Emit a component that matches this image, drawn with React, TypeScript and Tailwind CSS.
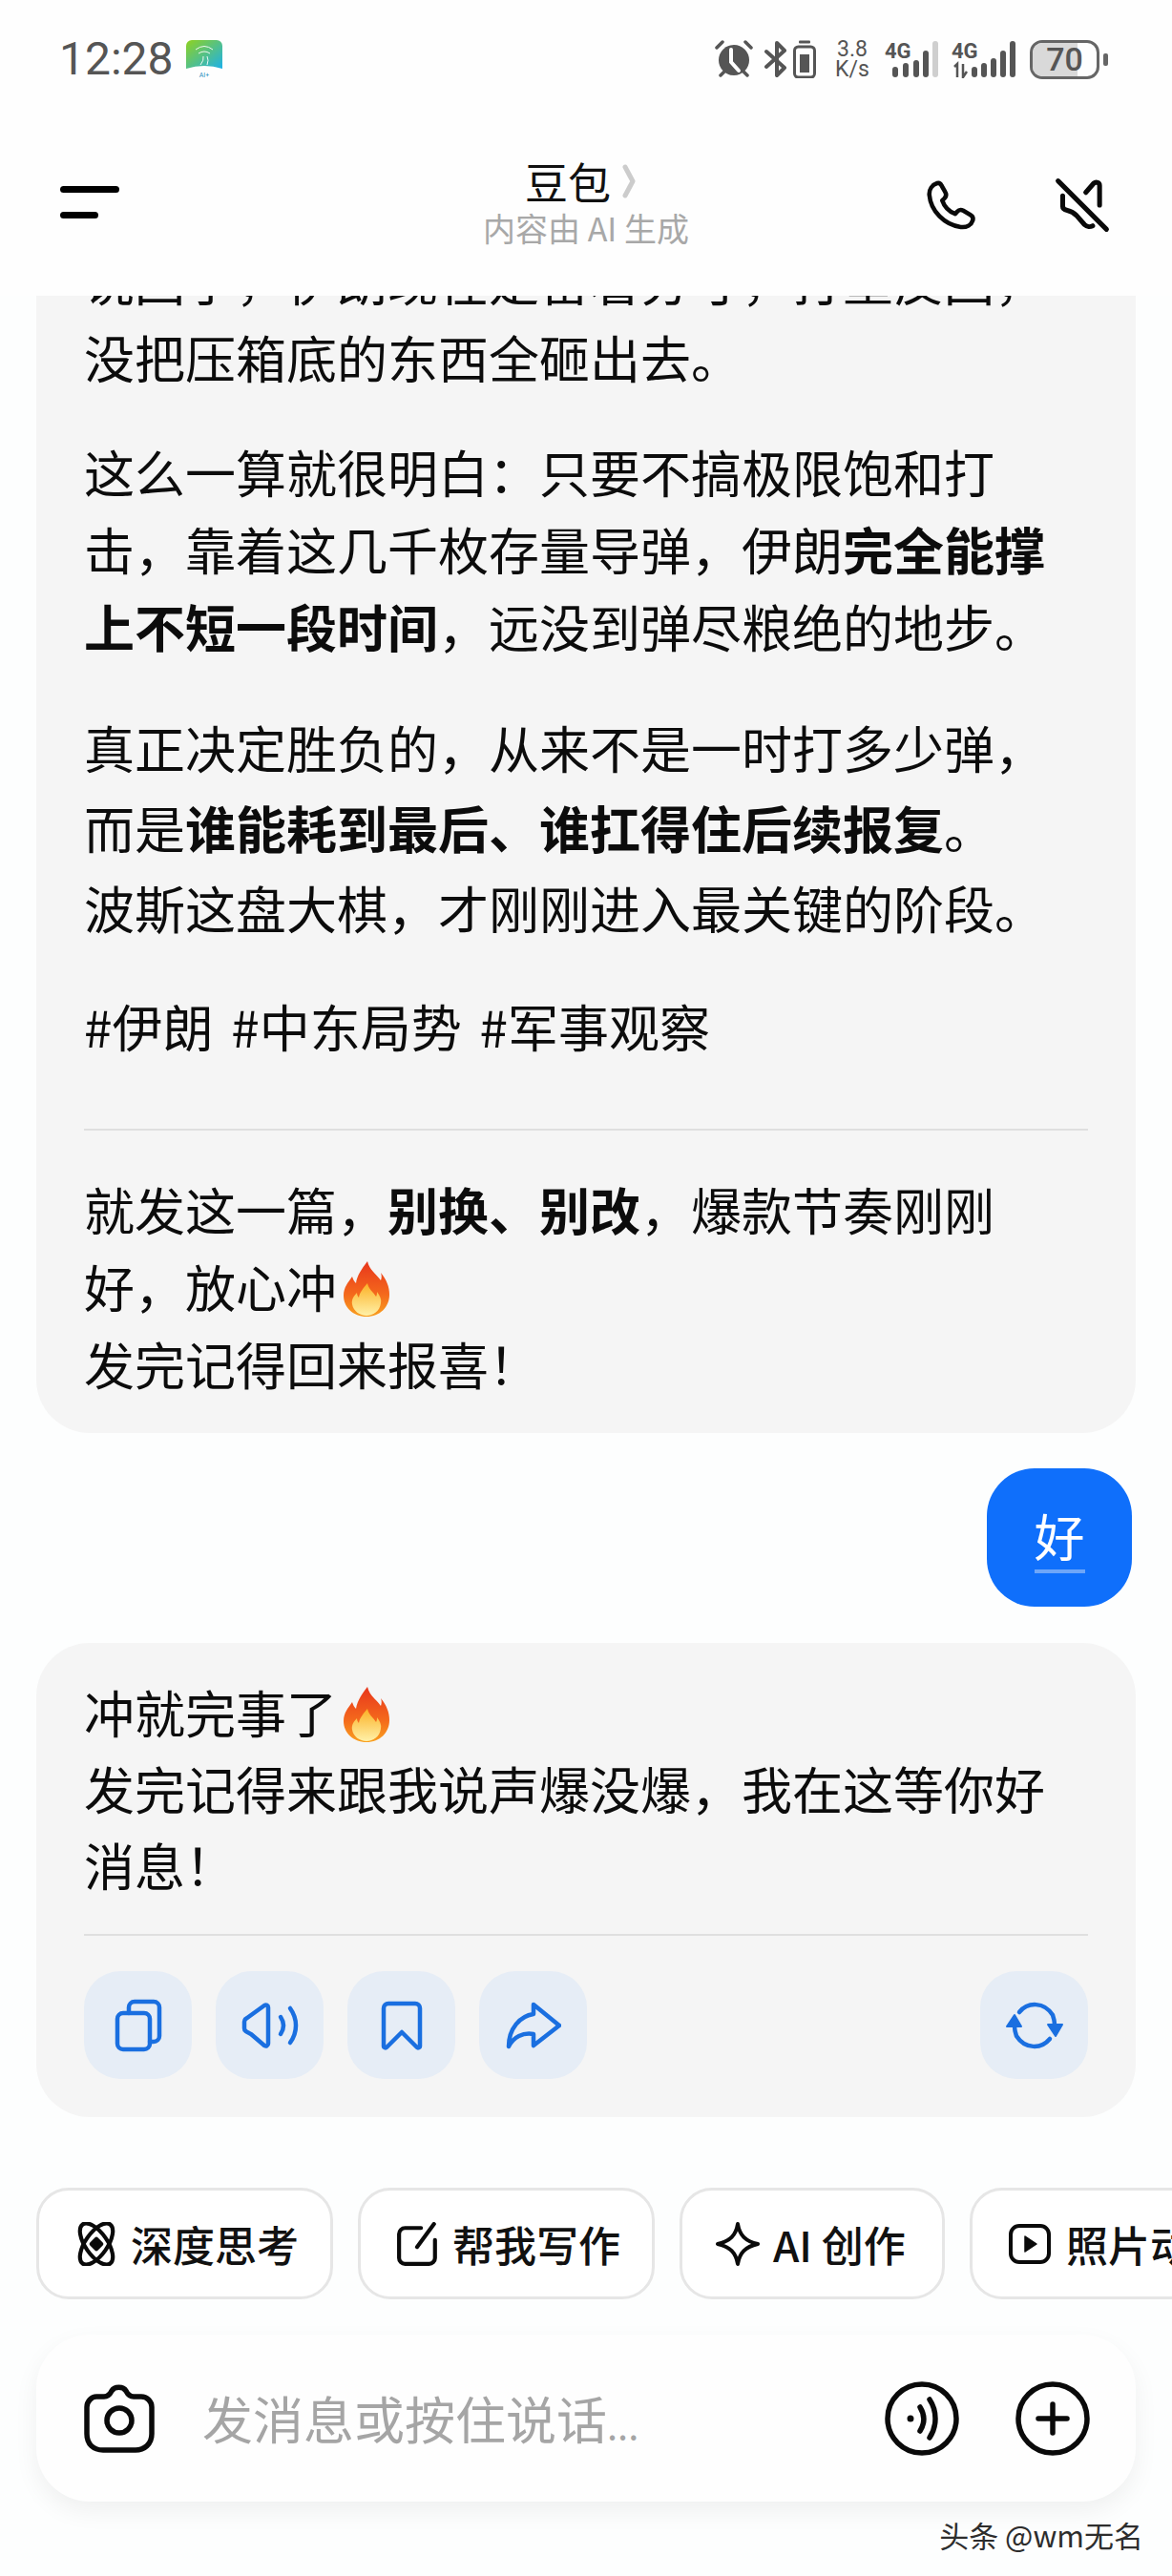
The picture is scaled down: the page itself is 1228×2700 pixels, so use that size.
import React from "react";

const cjk = "[font-family:'Noto_Sans_CJK_SC',sans-serif]";

function Flame() {
  return (
    <svg viewBox="0 0 50 60" className="inline-block w-[52px] h-[60px] align-[-10px] ml-[5px]">
      <defs>
        <linearGradient id="flameOuter" x1="0" y1="0" x2="0" y2="1">
          <stop offset="0" stopColor="#e8361c" />
          <stop offset="0.6" stopColor="#f4691c" />
          <stop offset="1" stopColor="#f9a01f" />
        </linearGradient>
        <linearGradient id="flameInner" x1="0" y1="0" x2="0" y2="1">
          <stop offset="0" stopColor="#fbb024" />
          <stop offset="1" stopColor="#fff1a8" />
        </linearGradient>
      </defs>
      <path
        d="M26 1c2 9 9 13 14 20 1-3 1-5 0-8 6 7 9 15 9 23 0 13-10 23-24 23S1 49 1 37c0-9 5-14 9-20 1 3 2 5 4 7 1-8 6-15 12-23z"
        fill="url(#flameOuter)"
      />
      <path
        d="M26 24c1 6 6 9 9 14 1-2 1-3 1-5 3 4 5 8 4 12-1 8-8 13-15 13S11 53 10 46c-1-5 2-9 5-12 0 2 1 4 2 5 1-6 5-10 9-15z"
        fill="url(#flameInner)"
      />
    </svg>
  );
}

function AppIcon() {
  return (
    <svg viewBox="0 0 38 40" className="w-[38px] h-[40px] ml-[13px]">
      <defs>
        <linearGradient id="appGrad" x1="0" y1="0" x2="1" y2="1">
          <stop offset="0" stopColor="#8fd21f" />
          <stop offset="1" stopColor="#1cb0ea" />
        </linearGradient>
      </defs>
      <path d="M0 6a6 6 0 0 1 6-6h26a6 6 0 0 1 6 6v24q-19-6-38 0z" fill="url(#appGrad)" />
      <g fill="none" stroke="#fff" strokeWidth="1" opacity="0.9">
        <path d="M10 10q9-7 18 0" />
        <path d="M13 14q6-4 12 0" />
        <path d="M15 26q4-5 3-9" />
        <path d="M22 26q2-5 0-9" />
      </g>
      <text x="19" y="38.5" textAnchor="middle" fontSize="7" fill="#2a8fc0" fontFamily="Roboto">AI+</text>
    </svg>
  );
}

function StatusIcons() {
  return (
    <div className="flex items-center text-[#555] [font-family:Roboto,sans-serif]">
      {/* alarm */}
      <svg viewBox="0 0 42 40" className="w-[42px] h-[40px]" fill="#555">
        <circle cx="21" cy="21" r="16" />
        <path d="M3 8l6-6M39 8l-6-6M7 37l4-4M35 37l-4-4" stroke="#555" strokeWidth="3.5" strokeLinecap="round" />
        <path d="M18 10v13l8 9" stroke="#fff" strokeWidth="4" fill="none" strokeLinecap="round" />
      </svg>
      {/* bluetooth + battery */}
      <svg viewBox="0 0 24 40" className="w-[24px] h-[40px] ml-[11px]" fill="none" stroke="#555" strokeWidth="4" strokeLinecap="round" strokeLinejoin="round">
        <path d="M2 12l19 17-8 8V3l8 8L2 28" />
      </svg>
      <svg viewBox="0 0 24 40" className="w-[24px] h-[40px] ml-[6px]">
        <rect x="6" y="0.5" width="12" height="3" rx="1" fill="#555" />
        <rect x="1.5" y="7" width="21" height="32" rx="4" fill="none" stroke="#555" strokeWidth="3" />
        <rect x="7" y="15" width="10" height="19" fill="#555" />
      </svg>
      <div className="ml-[19px] w-[38px] flex flex-col items-center text-[23px] leading-[21px] font-normal">
        <span>3.8</span>
        <span>K/s</span>
      </div>
      {/* sim 1 */}
      <svg viewBox="0 0 56 40" className="w-[56px] h-[40px] ml-[15px]">
        <text x="0" y="19" fontSize="22" fontWeight="700" fill="#555" fontFamily="Roboto">4G</text>
        <rect x="8" y="28" width="6" height="11" rx="3" fill="#555" />
        <rect x="19" y="24" width="6" height="15" rx="3" fill="#555" />
        <rect x="30" y="21" width="6" height="18" rx="3" fill="#555" />
        <rect x="40" y="11" width="6" height="28" rx="3" fill="#555" />
        <rect x="50" y="1" width="6" height="38" rx="3" fill="#cfcfcf" />
      </svg>
      {/* sim 2 */}
      <svg viewBox="0 0 68 40" className="w-[68px] h-[40px] ml-[14px]">
        <text x="0" y="19" fontSize="22" fontWeight="700" fill="#555" fontFamily="Roboto">4G</text>
        <path d="M3 28l3-3v14M12 25v14l4-6" stroke="#555" strokeWidth="2.5" fill="none" />
        <rect x="21" y="28" width="6" height="11" rx="3" fill="#555" />
        <rect x="31" y="24" width="6" height="15" rx="3" fill="#555" />
        <rect x="41" y="19" width="6" height="20" rx="3" fill="#555" />
        <rect x="51" y="11" width="6" height="28" rx="3" fill="#555" />
        <rect x="61" y="1" width="6" height="38" rx="3" fill="#555" />
      </svg>
      {/* battery */}
      <div className="relative ml-[14px] w-[73px] h-[41px] rounded-[13px] border-[3px] border-[#666] overflow-hidden flex items-center justify-center">
        <div className="absolute left-0 top-0 bottom-0 w-[70%] bg-[#d9d9d9]" />
        <span className="relative text-[34px] leading-none font-medium text-[#555]">70</span>
      </div>
      <div className="ml-[4px] w-[5px] h-[13px] rounded-[2px] bg-[#666]" />
    </div>
  );
}

function ActionButton({ children }: { children: React.ReactNode }) {
  return (
    <button className="w-[113px] h-[113px] rounded-[38px] bg-[#e6edf6] flex items-center justify-center">
      {children}
    </button>
  );
}

const blueStroke = {
  fill: "none",
  stroke: "#1a6fe0",
  strokeWidth: 4.5,
  strokeLinecap: "round" as const,
  strokeLinejoin: "round" as const,
};

const blackStroke = {
  fill: "none",
  stroke: "#0a0a0a",
  strokeWidth: 4,
  strokeLinecap: "round" as const,
  strokeLinejoin: "round" as const,
};

function Chip({ icon, label, className }: { icon: React.ReactNode; label: string; className: string }) {
  return (
    <div className={`shrink-0 h-[117px] rounded-[34px] border-[3px] border-[#e6e6e6] bg-white flex items-center ${className}`}>
      {icon}
      <span className="text-[44px] leading-none font-medium text-[#111] whitespace-nowrap">{label}</span>
    </div>
  );
}

export default function App() {
  return (
    <div className={`w-[1228px] h-[2700px] overflow-hidden bg-[#fdfefe] flex flex-col ${cjk}`}>
      {/* status bar + title */}
      <header className="h-[310px] shrink-0 bg-[#fefefe] relative z-10">
        <div className="h-[124px] pl-[62px] pr-[67px] flex items-center justify-between">
          <div className="flex items-center">
            <span className="text-[48px] leading-none text-[#555] [font-family:Roboto,sans-serif]">12:28</span>
            <AppIcon />
          </div>
          <StatusIcons />
        </div>
        <div className="h-[186px] pl-[63px] pr-[65px] pb-[10px] flex items-center justify-between">
          <div className="flex flex-col gap-[20px]">
            <div className="w-[62px] h-[7px] rounded-full bg-black" />
            <div className="w-[40px] h-[7px] rounded-full bg-black" />
          </div>
          <div className="flex flex-col items-center ml-[124px]">
            <div className="flex items-center">
              <span className="text-[45px] leading-[48px] text-[#111]">豆包</span>
              <svg viewBox="0 0 14 36" className="w-[14px] h-[36px] ml-[12px]" fill="none" stroke="#cccccc" strokeWidth="5" strokeLinecap="round" strokeLinejoin="round">
                <path d="M3 3l8 15-8 15" />
              </svg>
            </div>
            <span className="text-[34px] leading-[40px] mt-[5px] ml-[12px] text-[#a8a8a8]">内容由 AI 生成</span>
          </div>
          <div className="flex items-center gap-[80px] mt-[6px]">
            <svg viewBox="0 0 24 24" className="w-[58px] h-[58px]" fill="none" stroke="#0a0a0a" strokeWidth="1.9" strokeLinejoin="round">
              <path d="M6.2 2.5C4 3.2 2.6 5.2 2.8 7.6c.6 7 6.6 13 13.6 13.9 2.6.3 4.6-1 5.2-2.9.3-1-.1-1.9-1-2.4l-3.1-1.8c-.9-.5-1.9-.4-2.6.4l-.9 1c-2.5-1-4.7-3.2-5.6-5.8l1-1c.7-.8.8-1.8.3-2.6L8 3.4c-.4-.8-1.1-1.1-1.8-.9z" />
            </svg>
            <svg viewBox="0 0 24 24" className="w-[58px] h-[58px]" fill="none" stroke="#0a0a0a" strokeWidth="2.1" strokeLinecap="round" strokeLinejoin="round">
              <path d="M1.5 1.5l21 21" />
              <path d="M13.5 6.5L17 2.5c1-.8 2.5-.3 2.5 1V12" />
              <path d="M3.5 8v4.5c0 1 .8 1.5 2 1.8 2 .5 3 1.2 4 2.2l3.5 4c1 1 2.5 1 3.5.5" />
            </svg>
          </div>
        </div>
      </header>

      {/* messages */}
      <main className="flex-1 overflow-hidden text-[53px] leading-[81px] text-[#0c0c0c]">
        <section className="mx-[38px] mt-[-57px] rounded-[56px] bg-[#f5f5f5] px-[50px] pb-[32px]">
          <p className="mb-[39px]">
            说回了，伊朗现在是留着分寸，打重反回，
            <br />
            没把压箱底的东西全砸出去。
          </p>
          <p className="mb-[44px]">
            这么一算就很明白：只要不搞极限饱和打
            <br />
            击，靠着这几千枚存量导弹，伊朗<strong className="font-bold">完全能撑</strong>
            <br />
            <strong className="font-bold">上不短一段时间</strong>，远没到弹尽粮绝的地步。
          </p>
          <p className="mb-[42px] leading-[84px]">
            真正决定胜负的，从来不是一时打多少弹，
            <br />
            而是<strong className="font-bold">谁能耗到最后、谁扛得住后续报复</strong>。
            <br />
            波斯这盘大棋，才刚刚进入最关键的阶段。
          </p>
          <p className="[word-spacing:7px]">#伊朗 #中东局势 #军事观察</p>
          <hr className="border-0 h-[2px] bg-[#dfdfdf] mt-[67px] mb-[42px]" />
          <p>
            就发这一篇，<strong className="font-bold">别换、别改</strong>，爆款节奏刚刚
            <br />
            好，放心冲<Flame />
            <br />
            发完记得回来报喜！
          </p>
        </section>

        <div className="flex justify-end pr-[42px] mt-[37px]">
          <div className="w-[152px] h-[145px] rounded-[50px] bg-[#0f6ffb] flex flex-col items-center justify-center text-white">
            <span className="leading-[60px] mt-[4px]">好</span>
            <div className="w-[53px] h-[4px] mt-[6px] bg-[#6ea6f8]" />
          </div>
        </div>

        <section className="mx-[38px] mt-[38px] rounded-[56px] bg-[#f5f5f5] px-[50px] pt-[32px] pb-[40px]">
          <p className="leading-[80px]">
            冲就完事了<Flame />
            <br />
            发完记得来跟我说声爆没爆，我在这等你好
            <br />
            消息！
          </p>
          <hr className="border-0 h-[2px] bg-[#dfdfdf] mt-[33px] mb-[37px]" />
          <div className="flex justify-between">
            <div className="flex gap-[25px]">
              <ActionButton>
                <svg viewBox="0 0 50 56" className="w-[50px] h-[56px]" {...blueStroke}>
                  <rect x="3" y="15" width="34" height="38" rx="6" />
                  <path d="M15 15V9a6 6 0 0 1 6-6h20a6 6 0 0 1 6 6v30a6 6 0 0 1-6 6h-4" />
                </svg>
              </ActionButton>
              <ActionButton>
                <svg viewBox="0 0 60 50" className="w-[60px] h-[50px]" {...blueStroke}>
                  <path d="M3 21c0-2 1-3 3-4L24 4c2-1 4 0 4 2v38c0 2-2 3-4 2L10 34c-4-2-7-3-7-6z" />
                  <path d="M41 16c4 6 4 12 0 18" />
                  <path d="M51 7c8 11 8 25 0 36" />
                </svg>
              </ActionButton>
              <ActionButton>
                <svg viewBox="0 0 44 52" className="w-[44px] h-[52px]" {...blueStroke}>
                  <path d="M3 8a5 5 0 0 1 5-5h28a5 5 0 0 1 5 5v40c0 1-2 2-3 1L22 33 6 49c-1 1-3 0-3-1z" />
                </svg>
              </ActionButton>
              <ActionButton>
                <svg viewBox="0 0 58 50" className="w-[58px] h-[50px]" {...blueStroke}>
                  <path d="M3 47C3 28 15 15 29 13V3l27 22-27 21V34C18 32 8 37 3 47z" />
                </svg>
              </ActionButton>
            </div>
            <ActionButton>
              <svg viewBox="0 0 60 52" className="w-[60px] h-[52px]" {...blueStroke}>
                <path d="M14 12c9-11 26-11 35 3 1 3 2 6 2 10" />
                <path d="M46 40c-9 11-26 11-35-3-1-3-2-6-2-10" />
                <path d="M44 25h15l-7 12z" fill="#1a6fe0" strokeWidth="2" />
                <path d="M1 27h15L9 15z" fill="#1a6fe0" strokeWidth="2" />
              </svg>
            </ActionButton>
          </div>
        </section>
      </main>

      {/* shortcuts */}
      <div className="h-[117px] shrink-0 pl-[38px] flex gap-[26px] overflow-hidden">
        <Chip
          className="w-[311px] pl-[37px] gap-[13px]"
          icon={
            <svg viewBox="0 0 44 44" className="w-[46px] h-[46px]" {...blackStroke}>
              <ellipse cx="22" cy="22" rx="11" ry="24" transform="rotate(-35 22 22)" />
              <ellipse cx="22" cy="22" rx="11" ry="24" transform="rotate(35 22 22)" />
              <path d="M22 17l5 5-5 5-5-5z" fill="#0a0a0a" />
            </svg>
          }
          label="深度思考"
        />
        <Chip
          className="w-[311px] pl-[37px] gap-[13px]"
          icon={
            <svg viewBox="0 0 44 44" className="w-[46px] h-[46px]" {...blackStroke}>
              <path d="M25 6H9a6 6 0 0 0-6 6v24a6 6 0 0 0 6 6h24a6 6 0 0 0 6-6V18" />
              <path d="M21 25L38 2" />
            </svg>
          }
          label="帮我写作"
        />
        <Chip
          className="w-[278px] pl-[35px] gap-[14px]"
          icon={
            <svg viewBox="0 0 46 46" className="w-[46px] h-[46px]" {...blackStroke}>
              <path d="M23 2c2 12 8 18 21 21-13 3-19 9-21 21-2-12-8-18-21-21 13-3 19-9 21-21z" />
            </svg>
          }
          label="AI 创作"
        />
        <Chip
          className="w-[320px] pl-[38px] gap-[16px]"
          icon={
            <svg viewBox="0 0 44 44" className="w-[44px] h-[44px]" {...blackStroke}>
              <rect x="2" y="3" width="40" height="38" rx="9" />
              <path d="M17 14l12 8-12 8z" fill="#0a0a0a" strokeWidth="1.5" />
            </svg>
          }
          label="照片动漫"
        />
      </div>

      {/* composer */}
      <div className="h-[175px] shrink-0 mx-[38px] mt-[37px] rounded-[56px] bg-[#fefefe] shadow-[0_10px_26px_rgba(0,0,0,0.06)] pl-[50px] pr-[48px] flex items-center">
        <svg viewBox="0 0 74 72" className="w-[74px] h-[72px]" fill="none" stroke="#0a0a0a" strokeWidth="5.5" strokeLinejoin="round">
          <path d="M13 13h8c4 0 6-2 8-6 3-5 12-5 15 0 2 4 4 6 8 6h8c6 0 11 5 11 11v28c0 11-8 17-17 17H20C10 69 3 63 3 52V24c0-6 5-11 10-11z" />
          <circle cx="37" cy="38" r="13" />
        </svg>
        <span className="ml-[50px] flex-1 text-[53px] leading-none text-[#a5a5a5]">
          发消息或按住说话<span className="text-[40px]">...</span>
        </span>
        <svg viewBox="0 0 78 78" className="w-[78px] h-[78px]" fill="none" stroke="#0a0a0a" strokeWidth="5.5" strokeLinecap="round">
          <circle cx="39" cy="39" r="36" />
          <circle cx="27" cy="39" r="2.5" fill="#0a0a0a" strokeWidth="2" />
          <path d="M37 27c5 8 5 17 0 25" />
          <path d="M47 19c8 12 8 28 0 40" />
        </svg>
        <svg viewBox="0 0 78 78" className="w-[78px] h-[78px] ml-[59px]" fill="none" stroke="#0a0a0a" strokeWidth="5.5" strokeLinecap="round">
          <circle cx="39" cy="39" r="36" />
          <path d="M39 24v30M24 39h30" />
        </svg>
      </div>

      <div className="h-[78px] shrink-0 pr-[30px] pt-[17px] text-right text-[31px] leading-[36px] text-[#2d2d2d]">头条 @wm无名</div>
    </div>
  );
}
